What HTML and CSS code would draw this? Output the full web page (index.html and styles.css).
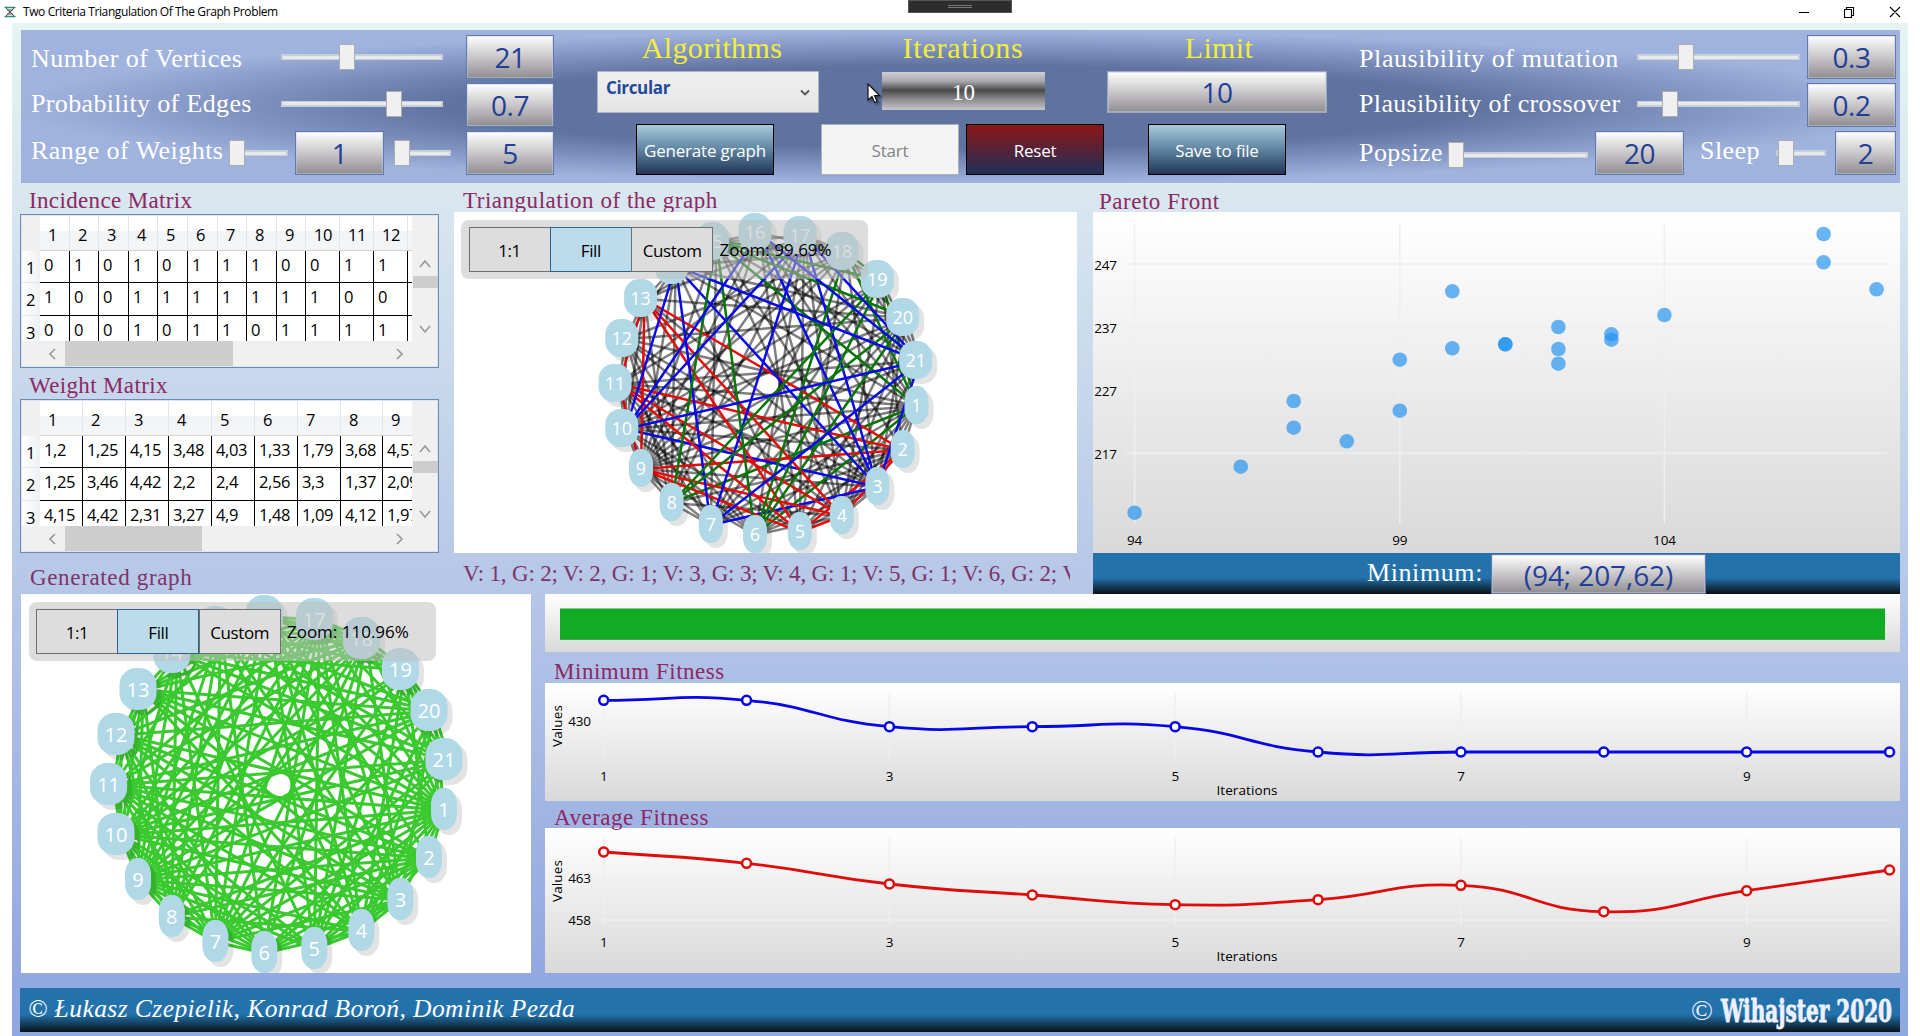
FILE: index.html
```html
<!DOCTYPE html>
<html lang="en">
<head>
<meta charset="utf-8">
<title>Two Criteria Triangulation Of The Graph Problem</title>
<link rel="stylesheet" href="styles.css">
</head>
<body>
<div class="titlebar">
  <svg class="app-icon" width="12" height="12" viewBox="0 0 12 12"><path d="M0.500 1.500h11M0.500 10.500h11" stroke="#2f8f85" stroke-width="1.400"/><path d="M2 1.500q1 2.500 4 4.500q3-2 4-4.500M2 10.500q1-2.500 4-4.500q3 2 4 4.500M3.500 4h5M3.500 8h5" fill="none" stroke="#333" stroke-width="0.900"/></svg>
  <span class="app-title">Two Criteria Triangulation Of The Graph Problem</span>
  <div class="debug-handle"><i></i><i></i></div>
  <svg class="win-buttons" width="104" height="12" viewBox="0 0 104 12" fill="none" stroke="#000" stroke-width="1.100"><path d="M0 6.500h10M45.500 3.500h7v8h-7zM47.500 3.500v-2h7v8h-2M91 1l10 10M101 1l-10 10"/></svg>
</div>
<div class="app">
  <header class="controls">
    <div class="group left">
      <div class="row r1"><label class="w250">Number of Vertices</label><div class="slider w162"><b style="margin-left:58px"></b></div><output class="box w88 ml23">21</output></div>
      <div class="row r2"><label class="w250">Probability of Edges</label><div class="slider w162"><b style="margin-left:105px"></b></div><output class="box w88 ml23">0.7</output></div>
      <div class="row r3"><label class="w198">Range of Weights</label><div class="slider w59"><b></b></div><output class="box w89 ml7">1</output><div class="slider w57 ml10"><b></b></div><output class="box w88 ml15">5</output></div>
    </div>
    <div class="group center">
      <div class="heads"><h2 class="h-a">Algorithms</h2><h2 class="h-b">Iterations</h2><h2 class="h-c">Limit</h2></div>
      <div class="fields">
        <div class="combo"><span>Circular</span><svg width="10" height="8" viewBox="0 0 10 8"><path d="M1 1.500l4 4 4-4" fill="none" stroke="#555" stroke-width="1.800"/></svg></div>
        <output class="iter">10</output>
        <output class="box limit">10</output>
      </div>
      <div class="buttons">
        <button class="btn">Generate graph</button><button class="btn off">Start</button><button class="btn reset">Reset</button><button class="btn save">Save to file</button>
      </div>
      <svg class="cursor" width="16" height="22" viewBox="0 0 16 22"><path d="M1 1v16l4-3.500 2.500 6 2.500-1-2.500-5.800h5z" fill="#fff" stroke="#111" stroke-width="1.200"/></svg>
    </div>
    <div class="group right">
      <div class="row r1"><label class="w278">Plausibility of mutation</label><div class="slider w163"><b style="margin-left:41px"></b></div><output class="box w89 ml7">0.3</output></div>
      <div class="row r2"><label class="w278">Plausibility of crossover</label><div class="slider w163"><b style="margin-left:25px"></b></div><output class="box w89 ml7">0.2</output></div>
      <div class="row r3"><label class="w89 low">Popsize</label><div class="slider w140 low"><b></b></div><output class="box w89 ml7">20</output><label class="w76 ml16">Sleep</label><div class="slider w50"><b style="margin-left:2px"></b></div><output class="box w61 ml9">2</output></div>
    </div>
  </header>

  <div class="upper">
    <section class="matrices">
      <h3>Incidence Matrix</h3>
      <div class="matrix" id="incidence"></div>
      <h3>Weight Matrix</h3>
      <div class="matrix" id="weights"></div>
      <h3 class="generated">Generated graph</h3>
    </section>
    <section class="triangulation">
      <h3>Triangulation of the graph</h3>
      <div class="canvas">
        <svg id="tri" width="623" height="341" viewBox="454 212 623 341"></svg>
        <div class="zoombar"><span>1:1</span><span class="on">Fill</span><span>Custom</span><em>Zoom: 99.69%</em></div>
      </div>
      <p class="groups">V: 1, G: 2; V: 2, G: 1; V: 3, G: 3; V: 4, G: 1; V: 5, G: 1; V: 6, G: 2; V: 7, G: 3</p>
    </section>
    <section class="pareto">
      <h3>Pareto Front</h3>
      <svg id="pareto" class="plot" width="807" height="341" viewBox="1093 212 807 341"></svg>
      <div class="minimum"><span>Minimum:</span><output class="box">(94; 207,62)</output></div>
    </section>
  </div>

  <div class="lower">
    <div class="canvas gen">
      <svg id="gen" width="510" height="379" viewBox="21 594 510 379"></svg>
      <div class="zoombar"><span>1:1</span><span class="on">Fill</span><span>Custom</span><em>Zoom: 110.96%</em></div>
    </div>
    <section class="charts">
      <div class="progress"><div></div></div>
      <h3>Minimum Fitness</h3>
      <svg id="minfit" class="plot" width="1355" height="118" viewBox="545 683 1355 118"></svg>
      <h3 class="avg">Average Fitness</h3>
      <svg id="avgfit" class="plot" width="1355" height="145" viewBox="545 828 1355 145"></svg>
    </section>
  </div>

  <footer>
    <span class="authors">© Łukasz Czepielik, Konrad Boroń, Dominik Pezda</span>
    <svg width="204" height="44" viewBox="0 0 204 44"><text class="cpy" x="0" y="32" textLength="22" lengthAdjust="spacingAndGlyphs">©</text><text class="brand" x="30" y="34" textLength="171" lengthAdjust="spacingAndGlyphs">Wihajster 2020</text></svg>
  </footer>
</div>
<script src="app.js"></script>
</body>
</html>
```
FILE: styles.css
```css
* { box-sizing: border-box; }
body { margin: 0; width: 1920px; height: 1036px; overflow: hidden; background: #fff; font-family: "Open Sans", "Noto Sans", sans-serif; color: #000; }
h2, h3, p { margin: 0; font-weight: normal; }
svg { display: block; }

.titlebar { position: relative; height: 23px; display: flex; align-items: center; padding: 0 17px 0 4px; }
.app-title { font-size: 12px; letter-spacing: -0.4px; margin-left: 7px; flex: 1; }
.debug-handle { position: absolute; left: 908px; top: 0; width: 104px; height: 13px; background: #2d2d30; border: 1px solid #555; padding-top: 4px; }
.debug-handle i { display: block; width: 24px; height: 1px; background: #777; margin: 0 auto 1px; }

.app { margin: 0 12px; height: 1013px; padding: 7px 8px 0 8px; background: linear-gradient(#e6f5f3 0%, #d8e6ef 18%, #b8c9e8 53%, #92a8e0 94%, #92a8e0 100%); }

.controls { height: 153px; margin-left: 1px; display: flex; padding-top: 5px; position: relative; background: radial-gradient(ellipse 940px 76px at center, #6072a0 0%, #6072a0 54%, #a0b2de 100%); }
.group { display: flex; flex-direction: column; gap: 4px; }
.group.left { width: 576px; padding-left: 10px; }
.group.center { width: 762px; gap: 0; margin-top: -5px; position: relative; }
.row { display: flex; height: 44px; align-items: center; }
.row label { font: 26px/30px "Liberation Serif", serif; color: #fff; letter-spacing: 0.45px; white-space: nowrap; }
.r1 label { padding-top: 4px; }
.r1 .w278 { letter-spacing: 0.6px; }
.r2 label { padding-bottom: 2px; letter-spacing: 0.35px; }
.r3 label { padding-bottom: 4px; }
.r2 .slider { margin-bottom: 3px; }
.row .low { position: relative; top: 2px; }
.box { display: flex; align-items: center; justify-content: center; height: 44px; border: 1px solid #6478aa; background: linear-gradient(#fff, #c9c7c9 50%, #8f8d8f); color: #223f98; font-size: 28px; letter-spacing: -0.5px; padding-bottom: 0; box-shadow: inset 0 0 0 1px rgba(190, 205, 230, .5); }
.slider { height: 26px; display: flex; align-items: center; background: linear-gradient(#e7eaea, #e7eaea) center/calc(100% - 4px) 3px no-repeat, linear-gradient(#c9ced8, #c9ced8) center/100% 6px no-repeat; }
.slider b { width: 16px; height: 26px; background: #f0f0f0; border: 1px solid #acacac; }
.w250 { width: 250px; } .w198 { width: 198px; } .w278 { width: 278px; } .w162 { width: 162px; } .w163 { width: 163px; } .w140 { width: 140px; }
.w88 { width: 88px; } .w89 { width: 89px; } .w76 { width: 76px; } .w61 { width: 61px; } .w59 { width: 59px; } .w57 { width: 57px; } .w50 { width: 50px; }
.ml7 { margin-left: 7px; } .ml9 { margin-left: 9px; } .ml10 { margin-left: 10px; } .ml15 { margin-left: 15px; } .ml16 { margin-left: 16px; } .ml23 { margin-left: 23px; }

.heads { display: flex; height: 41px; }
.heads h2 { font: 30px/36px "Liberation Serif", serif; color: #f2ee3a; text-align: center; letter-spacing: 0.4px; }
.h-a { width: 230px; } .h-b { width: 272px; } .h-c { width: 240px; }
.heads .h-b { letter-spacing: 0.75px; }
.fields { display: flex; height: 42px; align-items: flex-start; }
.combo { width: 222px; height: 42px; border: 1px solid #acb4c4; background: linear-gradient(#f0f0f0, #e5e5e5); display: flex; justify-content: space-between; padding: 4px 8px 0 8px; color: #22499a; font-weight: bold; font-size: 17px; letter-spacing: -0.35px; }
.combo svg { margin-top: 13px; }
.iter { width: 163px; height: 38px; margin: 1px 62px 0 63px; background: linear-gradient(#cfcfd4, #a5a5aa 25%, #4a4a4a 48%, #8b8b90 72%, #c6c6cc); color: #fff; font: 23px/42px "Liberation Serif", serif; text-align: center; }
.limit { width: 220px; height: 42px; border-color: #a0a8b8; }
.buttons { display: flex; padding: 11px 0 0 39px; }
.btn { width: 138px; height: 51px; padding: 2px 0 0; border: 1px solid #000; background: linear-gradient(#a8cadb, #5f84a0 50%, #223558); color: #fff; font: 17px "Open Sans", sans-serif; letter-spacing: -0.2px; white-space: nowrap; }
.btn.off { margin-left: 47px; background: #f4f4f4; color: #838383; border-color: #adb2b5; }
.btn.reset { margin-left: 7px; background: linear-gradient(#8b1616, #202f58); }
.btn.save { margin-left: 44px; }
.cursor { position: absolute; left: 270px; top: 53px; filter: drop-shadow(2px 2px 1px rgba(0, 0, 0, .4)); }

.upper { display: flex; height: 411px; }
h3 { font: 23px/26px "Liberation Serif", serif; color: #8c2863; letter-spacing: 0.52px; white-space: nowrap; }
.matrices { width: 419px; }
.matrices h3 { height: 31px; padding: 5px 0 0 9px; letter-spacing: 0.35px; }
.matrices h3.generated { height: 41px; padding: 12px 0 0 10px; color: #7d3468; letter-spacing: 0.65px; }
.triangulation { width: 623px; margin: 0 16px 0 15px; }
.triangulation h3, .pareto h3 { height: 29px; padding: 5px 0 0 9px; }
.pareto h3 { padding: 6px 0 0 6px; }
.groups { height: 41px; width: 607px; margin-left: 9px; overflow: hidden; font: 23px/41px "Liberation Serif", serif; color: #7d3468; white-space: nowrap; letter-spacing: -0.18px; }
.pareto { width: 807px; }
.canvas { position: relative; background: #fff; overflow: hidden; }
.plot { background: linear-gradient(#fff, #d9d9d9); }
.minimum { height: 41px; display: flex; align-items: center; background: linear-gradient(#2372ab 60%, #0a0f14); color: #fff; font: 26px "Liberation Serif", serif; letter-spacing: 0.6px; }
.minimum span { width: 398px; text-align: right; padding-right: 8px; padding-bottom: 2px; }
.minimum .box { width: 215px; height: 40px; font-family: "Open Sans", sans-serif; letter-spacing: -0.1px; padding: 2px 0 0; }

.matrix { height: 154px; border: 1px solid #6d8bb0; background: #f0f0f0; box-shadow: inset 0 0 0 1px #dbe4f0; padding: 1px; display: grid; grid-template: 125px 25px / 390px 26px; }
.grid { overflow: hidden; display: grid; grid-template-rows: 35px 32px 33px 33px; font-size: 16.500px; letter-spacing: -0.4px; }
.grid > div { white-space: nowrap; overflow: hidden; padding-left: 4px; border-right: 1.500px solid #000; border-bottom: 1.500px solid #000; background: #fff; line-height: 28px; }
.grid > .ch { border: 0; border-right: 1px solid #e3e5e8; border-bottom: 1px solid #d0d3d6; background: linear-gradient(#fff 45%, #f2f4f7 45%, #f4f5f7); padding-left: 8px; line-height: 37px; }
.grid > .rh { border: 0; border-bottom: 1px solid #e3e5e8; background: linear-gradient(90deg, #fff, #eef0f3); padding-left: 4px; line-height: 34px; }
.grid > .corner { border: 0; background: #f0f0f0; }
.vbar, .hbar { display: flex; align-items: center; }
.vbar { flex-direction: column; padding-top: 42px; }
.vbar i { width: 25px; height: 12px; background: #cdcdcd; margin: 6px 0 35px; flex: none; }
.vbar svg, .hbar svg { flex: none; }
.hbar { padding-left: 25px; }
.hbar i { height: 25px; background: #cdcdcd; margin-left: 6px; }
.hbar svg:last-child { margin-left: auto; margin-right: 7px; }

.zoombar { position: absolute; left: 7px; top: 8px; width: 407px; height: 59px; border-radius: 8px; background: rgba(190, 190, 190, .53); padding: 7px 8px; display: flex; font-size: 17px; letter-spacing: -0.4px; }
.zoombar span { width: 82px; height: 45px; margin-right: -0.700px; border: 1px solid #707070; background: #ddd; text-align: center; line-height: 45px; }
.zoombar span.on { background: #bcdcec; border-color: #2c628b; }
.zoombar em { font-style: normal; line-height: 46px; margin-left: 7px; letter-spacing: 0; }
.triangulation .zoombar { padding-left: 7.500px; }
.gen .zoombar { padding-left: 7px; left: 8px; }

.lower { display: flex; gap: 14px; height: 379px; margin-left: 1px; }
.gen { width: 510px; }
.charts { width: 1355px; }
.progress { height: 58px; padding: 14px 15px 12px; background: linear-gradient(#fff, #d9d9d9); }
.progress div { height: 32px; background: #11ab26; border-top: 1px solid #7fd08a; border-bottom: 1px solid #45a852; }
.charts h3 { height: 31px; padding: 7px 0 0 9px; }
.charts h3.avg { height: 27px; padding-top: 4px; }

footer { height: 44px; margin-top: 15px; display: flex; justify-content: space-between; padding: 0 5px 0 8px; background: linear-gradient(#2372ab 60%, #08121a); color: #fff; }
.authors { font: italic 25.500px/41px "Liberation Serif", serif; letter-spacing: 0.43px; }
.brand { font: bold 31px "DejaVu Serif Condensed", "DejaVu Serif", serif; fill: #eef0ff; stroke: #eef0ff; stroke-width: .8px; }
.cpy { font: 28px "Liberation Serif", serif; fill: #eef0ff; }

.tick { font: 13.500px "Open Sans", sans-serif; letter-spacing: -0.2px; }
.name { letter-spacing: 0.1px; }
.vertex { fill: #b0d8e6; }
.shadow { fill: rgba(0, 0, 0, .11); }
.vlabel { fill: #fff; text-anchor: middle; }
.middle { text-anchor: middle; }
```
FILE: app.js
```js
const byId = id => document.getElementById(id);

// Matrices
const bar = (d) => `<svg width="12" height="12" viewBox="0 0 12 12"><path d="${d}" fill="none" stroke="#9a9a9a" stroke-width="1.700"/></svg>`;
function matrix(id, widths, rows, thumb) {
  let cells = '<div class="corner"></div>';
  widths.forEach((w, i) => cells += `<div class="ch">${i < 12 ? i + 1 : ''}</div>`);
  rows.forEach((r, n) => {
    cells += `<div class="rh">${n + 1}</div>` + widths.map((w, i) => `<div>${r[i] ?? ''}</div>`).join('');
  });
  byId(id).innerHTML =
    `<div class="grid" style="grid-template-columns:18px ${widths.map(w => w + 'px').join(' ')}">${cells}</div>` +
    `<div class="vbar">${bar('M1 9l5-6 5 6')}<i></i>${bar('M1 3l5 6 5-6')}</div>` +
    `<div class="hbar">${bar('M8 1L3 6l5 5')}<i style="width:${thumb}px"></i>${bar('M4 1l5 5-5 5')}</div><div></div>`;
}
const incidence = [
  [0, 1, 0, 1, 0, 1, 1, 1, 0, 0, 1, 1], [1, 0, 0, 1, 1, 1, 1, 1, 1, 1, 0, 0], [0, 0, 0, 1, 0, 1, 1, 0, 1, 1, 1, 1]];
matrix('incidence', [30, 29, 30, 29, 30, 30, 29, 30, 29, 34, 34, 34, 34], incidence, 168);
matrix('weights', [43, 43, 43, 43, 43, 43, 43, 42, 43], [
  ['1,2', '1,25', '4,15', '3,48', '4,03', '1,33', '1,79', '3,68', '4,57'],
  ['1,25', '3,46', '4,42', '2,2', '2,4', '2,56', '3,3', '1,37', '2,09'],
  ['4,15', '4,42', '2,31', '3,27', '4,9', '1,48', '1,09', '4,12', '1,97']], 137);

// Circular graphs, vertices listed from 1 to 21
const triPos = [[916.5,405],[902.7,449],[877.3,486],[841.8,515],[799.8,531],[755,534],[710.8,524],[671.6,502],[641,468],[621.8,428],[615,383],[621.8,338],[640.6,298],[671.6,265],[712.4,241],[755,232],[800,235],[842,251],[877.3,279],[902.7,317],[915.7,360]];
const genPos = [[444,809],[429,857],[400.4,899],[361.4,930],[314.3,948],[264.3,952],[215.4,941],[171.8,916],[138,879],[116,834],[108.6,784],[116,734],[138,689],[171.8,652],[215.4,627],[264.3,616],[314.3,619],[361.4,638],[400.4,669],[429,710],[444,759]];
const teams = [
  ['#e60a0a', [2, 4, 5, 9, 11, 13]],
  ['#087508', [1, 6, 8, 15, 18, 19, 20]],
  ['#0a0ae6', [3, 7, 10, 14, 16, 17, 21]]];
const absent = ['6-8', '8-18', '18-20', '19-20', '14-16', '14-17', '16-17', '7-16', '7-10', '1-20'];
function connected(a, b, density) {
  if (a <= 3 && b <= 12 && incidence[a - 1][b - 1]) return true;
  const n = Math.sin(a * 127.1 + b * 311.7) * 43758.5453;
  return n - Math.floor(n) < density;
}
function graph(id, pos, o) {
  let back = '', front = '';
  for (let a = 1; a <= 21; a++) for (let b = a + 1; b <= 21; b++) {
    const [x1, y1] = pos[a - 1], [x2, y2] = pos[b - 1];
    const team = o.teams && teams.find(t => t[1].includes(a) && t[1].includes(b));
    if (team ? absent.includes(`${a}-${b}`) : !connected(a, b, o.density)) continue;
    const ax = x1 + (a > 9 ? o.shift : 0), bx = x2 + (b > 9 ? o.shift : 0);
    const line = `<line x1="${ax}" y1="${y1 + 1}" x2="${bx}" y2="${y2 + 1}" stroke="${team ? team[0] : o.color}" stroke-width="${o.width}"/>`;
    if (team) front += line; else back += line;
  }
  let nodes = '';
  pos.forEach(([x, y], i) => {
    const w = i < 9 ? o.w1 : o.w2, h = o.h, r = w * .46;
    const rect = (c, d) => `<rect class="${c}" x="${x - w / 2 + d}" y="${y - h / 2 + d}" width="${w}" height="${h}" rx="${r}" ry="${o.h * .4}"/>`;
    nodes += rect('shadow', 5) + rect('vertex', 0) + `<text class="vlabel" x="${x}" y="${y + o.font * .36 + 1}" font-size="${o.font}">${i + 1}</text>`;
  });
  byId(id).innerHTML = back + front + nodes;
}
graph('tri', triPos, { teams: true, density: .66, color: 'rgba(0,0,0,.5)', width: 2.5, w1: 24, w2: 33, h: 38, font: 18, shift: 4 });
graph('gen', genPos, { density: .74, color: '#3ac92f', width: 3, w1: 26, w2: 37, h: 42, font: 20, shift: 5 });

// Charts
const grid = (x1, y1, x2, y2) => `<line stroke="#efefef" stroke-width="1.500" x1="${x1}" y1="${y1}" x2="${x2}" y2="${y2}"/>`;
const label = (x, y, t, c = '') => `<text class="tick middle ${c}" x="${x}" y="${y + 4.500}">${t}</text>`;

const dots = [[1823.6,234],[1823.6,262.3],[1876.6,289.3],[1452.3,291.3],[1452.3,348.3],[1558.4,327],[1558.4,349],[1558.4,363.7],[1611.4,334.3],[1611.4,339.7],[1664.4,315],[1505.3,344.3],[1505.3,344.3],[1399.8,359.7],[1399.8,410.7],[1293.7,401],[1293.7,427.7],[1346.8,441.3],[1240.7,466.7],[1134.6,512.7]];
let p = '';
[[264, 247], [327.3, 237], [390.3, 227], [453.3, 217]].forEach(([y, t]) => p += grid(1126, y, 1887, y) + label(1105.5, y + 1, t));
[[1134.6, 94], [1399.8, 99], [1664.4, 104]].forEach(([x, t]) => p += grid(x, 224, x, 523) + label(x, 540, t));
dots.forEach(([x, y]) => p += `<circle cx="${x}" cy="${y}" r="7.300" fill="#2092f0" fill-opacity=".68"/>`);
byId('pareto').innerHTML = p;

// Smoothed line through the points, control points scaled by segment length
function smooth(pts, s = 1) {
  const at = i => pts[Math.max(0, Math.min(pts.length - 1, i))];
  const mid = (a, b) => [(a[0] + b[0]) / 2, (a[1] + b[1]) / 2];
  const len = (a, b) => Math.hypot(a[0] - b[0], a[1] - b[1]);
  let d = `M${pts[0]}`;
  for (let i = 0; i < pts.length - 1; i++) {
    const a = at(i - 1), b = at(i), c = at(i + 1), e = at(i + 2);
    const m1 = mid(a, b), m2 = mid(b, c), m3 = mid(c, e);
    const l1 = len(a, b), l2 = len(b, c), l3 = len(c, e);
    const k1 = l1 / (l1 + l2), k2 = l2 / (l2 + l3);
    const q = (m, n, k, v) => [0, 1].map(j => { const h = m[j] + (n[j] - m[j]) * k; return h + (m2[j] - h) * s + v[j] - h; });
    d += `C${q(m1, m2, k1, b)} ${q(m2, m3, k2, c)} ${c}`;
  }
  return d;
}
function fitness(id, ys, color, ticks, top, bottom, labelY, iterY, valuesY) {
  const pts = ys.map((y, i) => [603.7 + i * 142.87, y]);
  let s = '';
  ticks.forEach(([y, t]) => s += grid(598, y, 1894, y) + label(579.5, y, t));
  [0, 2, 4, 6, 8].forEach(i => s += grid(pts[i][0], top, pts[i][0], bottom) + label(pts[i][0], labelY, i + 1));
  s += `<path d="${smooth(pts)}" fill="none" stroke="${color}" stroke-width="2.800"/>`;
  pts.forEach(([x, y]) => s += `<circle cx="${x}" cy="${y}" r="4.500" fill="#fff" stroke="${color}" stroke-width="2.600"/>`);
  s += label(1247, iterY, 'Iterations', 'name') + `<text class="tick middle name" transform="translate(562 ${valuesY}) rotate(-90)">Values</text>`;
  byId(id).innerHTML = s;
}
fitness('minfit', [700.3, 700.3, 726.7, 726.7, 726.7, 752, 752, 752, 752, 752], '#0606e6', [[721, 430]], 693, 759, 776, 790, 726);
fitness('avgfit', [852, 863.3, 884, 895, 904.7, 899.7, 885.3, 911.7, 890.7, 870], '#e00b0b', [[878, 463], [920, 458]], 838, 925, 942, 956, 881);
```
